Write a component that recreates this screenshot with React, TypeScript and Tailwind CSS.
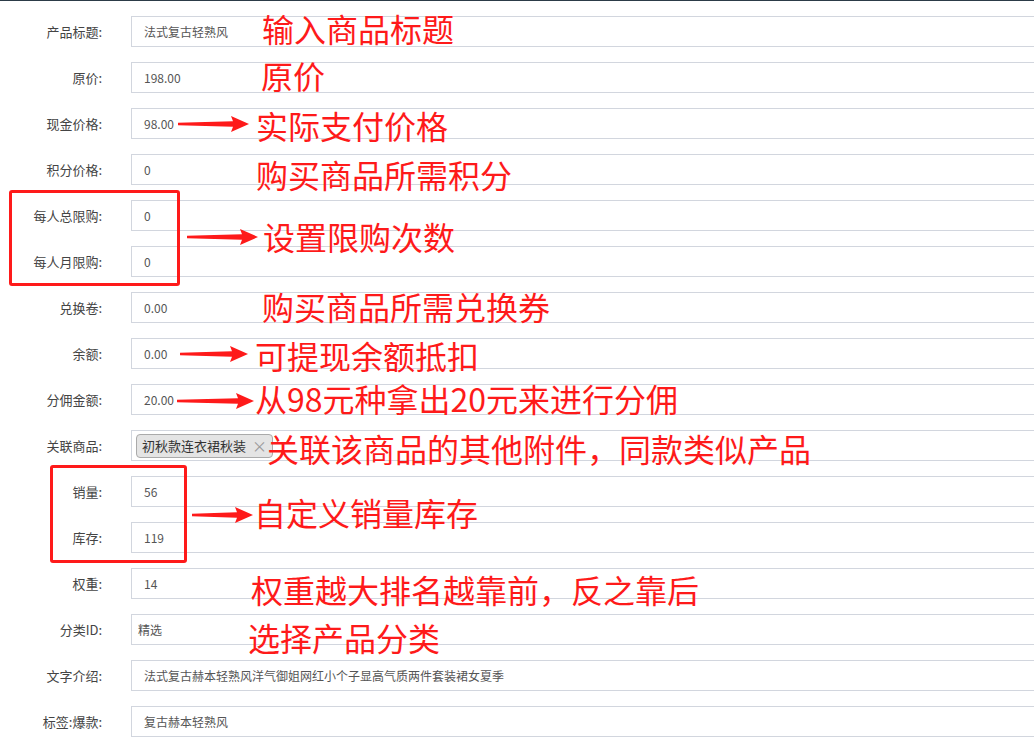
import React from 'react'

type Row = {
  label: string
  value?: string
  kind?: 'input' | 'tag' | 'select'
}

const rows: Row[] = [
  { label: '产品标题:', value: '法式复古轻熟风' },
  { label: '原价:', value: '198.00' },
  { label: '现金价格:', value: '98.00' },
  { label: '积分价格:', value: '0' },
  { label: '每人总限购:', value: '0' },
  { label: '每人月限购:', value: '0' },
  { label: '兑换卷:', value: '0.00' },
  { label: '余额:', value: '0.00' },
  { label: '分佣金额:', value: '20.00' },
  { label: '关联商品:', value: '初秋款连衣裙秋装', kind: 'tag' },
  { label: '销量:', value: '56' },
  { label: '库存:', value: '119' },
  { label: '权重:', value: '14' },
  { label: '分类ID:', value: '精选', kind: 'select' },
  { label: '文字介绍:', value: '法式复古赫本轻熟风洋气御姐网红小个子显高气质两件套装裙女夏季' },
  { label: '标签:爆款:', value: '复古赫本轻熟风' }
]

// red notes drawn over the screenshot
const notes = [
  { text: '输入商品标题', x: 262, y: 12 },
  { text: '原价', x: 261, y: 59 },
  { text: '实际支付价格', x: 256, y: 109 },
  { text: '购买商品所需积分', x: 256, y: 158 },
  { text: '设置限购次数', x: 263, y: 220 },
  { text: '购买商品所需兑换券', x: 262, y: 290 },
  { text: '可提现余额抵扣', x: 255, y: 339 },
  { text: '从98元种拿出20元来进行分佣', x: 255, y: 382 },
  { text: '关联该商品的其他附件，同款类似产品', x: 267, y: 432 },
  { text: '自定义销量库存', x: 254, y: 496 },
  { text: '权重越大排名越靠前，反之靠后', x: 251, y: 573 },
  { text: '选择产品分类', x: 248, y: 621 }
]

const arrows = [
  { x: 178, y: 124, w: 71 },
  { x: 187, y: 237, w: 71 },
  { x: 180, y: 354, w: 68 },
  { x: 177, y: 401, w: 77 },
  { x: 192, y: 515, w: 61 }
]

function Arrow({ w }: { w: number }) {
  const h = 18
  const head = 17
  return (
    <svg width={w} height={h} viewBox={`0 0 ${w} ${h}`}>
      <polygon
        fill="#fe1a1a"
        points={`0,7.8 ${w - head + 1},6.2 ${w - head - 1},1 ${w},9 ${w - head - 1},17 ${w - head + 1},11.8 0,10.2`}
      />
    </svg>
  )
}

function Field({ row }: { row: Row }) {
  if (row.kind === 'tag') {
    return (
      <div className="h-[31px] w-[920px] border border-[#d2d6de] bg-white flex items-center pl-[4px]">
        <span className="flex items-center h-[24px] px-[5px] bg-[#e4e4e4] border border-[#aaa] rounded-[4px] text-[13px] text-[#333]">
          {row.value}
          <span className="ml-[6px] text-[#999] text-[15px] leading-none">×</span>
        </span>
      </div>
    )
  }
  return (
    <div
      className={`h-[31px] w-[920px] border border-[#d2d6de] bg-white flex items-center text-[12px] text-[#555] ${
        row.kind === 'select' ? 'pl-[6px]' : 'pl-[12px]'
      }`}
    >
      {row.value}
    </div>
  )
}

export default function App() {
  return (
    <div
      className="relative w-[1034px] h-[748px] overflow-hidden bg-white"
      style={{ fontFamily: '"Noto Sans CJK SC", "Noto Sans", sans-serif' }}
    >
      <div className="h-px bg-[#2c3b48]" />
      <div className="pt-[15px]">
        {rows.map((row) => (
          <div key={row.label} className="flex items-start h-[46px]">
            <div className="w-[102px] shrink-0 h-[31px] flex items-center justify-end text-[13px] text-[#444]">
              {row.label}
            </div>
            <div className="ml-[29px] shrink-0">
              <Field row={row} />
            </div>
          </div>
        ))}
      </div>

      {/* red boxes */}
      <div className="absolute left-[9px] top-[190px] w-[171px] h-[96px] border-[3px] border-[#fe1a1a] rounded-[3px]" />
      <div className="absolute left-[50px] top-[465px] w-[137px] h-[98px] border-[3px] border-[#fe1a1a] rounded-[3px]" />

      {arrows.map((a, i) => (
        <div key={i} className="absolute" style={{ left: a.x, top: a.y - 9 }}>
          <Arrow w={a.w} />
        </div>
      ))}

      {notes.map((n) => (
        <div
          key={n.text}
          className="absolute text-[32px] leading-[32px] text-[#fe1a1a] whitespace-nowrap"
          style={{ left: n.x, top: n.y }}
        >
          {n.text}
        </div>
      ))}
    </div>
  )
}
